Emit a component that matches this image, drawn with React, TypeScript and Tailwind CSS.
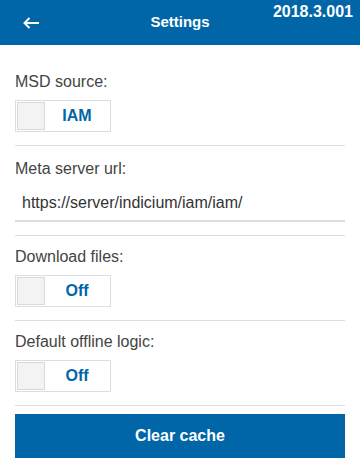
import React, { useState } from 'react';

interface ToggleProps {
  label: string;
  value: string;
}

const Toggle: React.FC<ToggleProps> = ({ label, value }) => (
  <div className="pt-[11px] pb-[13px] border-b border-[#dddddd]">
    <div className="text-[16px] leading-[20px] text-[#444444] mb-[8px]">{label}</div>
    <div className="flex items-center w-[96px] h-[32px] border border-[#dddddd] p-px">
      <div className="w-[28px] h-[28px] bg-[#f3f3f3] border border-[#d9d9d9]"></div>
      <span className="flex-1 text-center text-[16px] font-bold text-[#0066a8]">{value}</span>
    </div>
  </div>
);

export default function App() {
  const [url, setUrl] = useState('https://server/indicium/iam/iam/');

  return (
    <div className="w-[360px] min-h-[467px] bg-white font-['Liberation_Sans',Arial,sans-serif]">
      {/* Header */}
      <header className="h-[45px] bg-[#0066a8] text-white grid grid-cols-[1fr_auto_1fr]">
        <div className="flex items-center pl-[23px]">
          <svg width="17" height="12" viewBox="0 0 17 12" fill="none" stroke="white" strokeWidth="2">
            <path d="M16 6H1.5M6.5 1 1.5 6l5 5" />
          </svg>
        </div>
        <div className="flex items-center text-[15px] font-bold">Settings</div>
        <div className="flex justify-end pr-[7px] pt-[3px] text-[16px] font-bold leading-[18px]">2018.3.001</div>
      </header>

      <main className="px-[15px] pt-[16px]">
        <Toggle label="MSD source:" value="IAM" />

        <div className="pt-[13px] pb-[13px] border-b border-[#dddddd]">
          <div className="text-[16px] leading-[20px] text-[#444444] mb-[7px]">Meta server url:</div>
          <input
            value={url}
            onChange={e => setUrl(e.target.value)}
            className="w-full h-[36px] px-[7px] border-b-2 border-[#dddddd] text-[16px] text-[#333333] outline-none"
          />
        </div>

        <Toggle label="Download files:" value="Off" />
        <Toggle label="Default offline logic:" value="Off" />

        <button className="mt-[8px] w-full h-[44px] bg-[#0066a8] text-white text-[16px] font-bold">
          Clear cache
        </button>
      </main>
    </div>
  );
}
